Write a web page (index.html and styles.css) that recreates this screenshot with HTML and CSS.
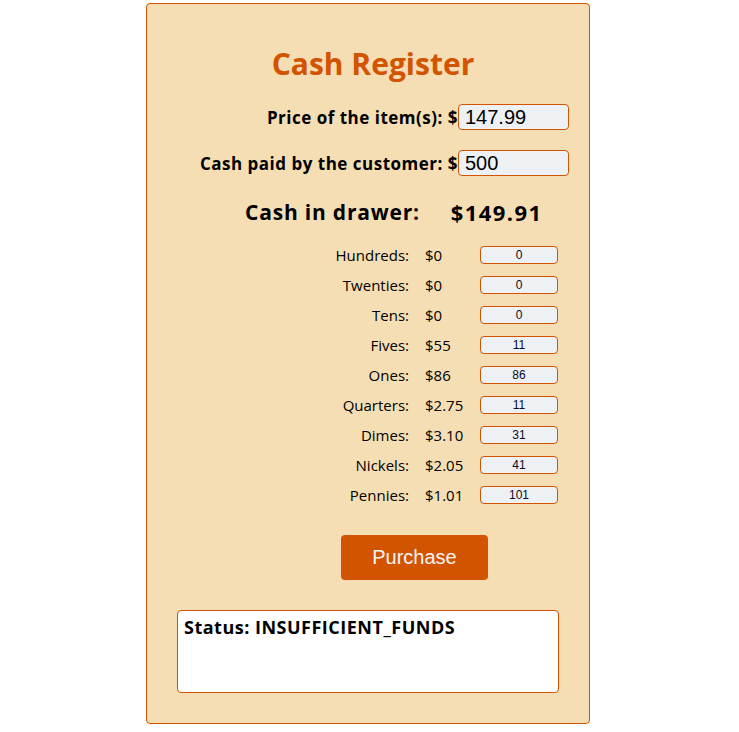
FILE: index.html
```html
<!DOCTYPE html>
<html>
<head>
<meta charset="utf-8">
<link rel="stylesheet" href="styles.css">
</head>
<body>
<main class="register">
  <h1 class="title">Cash Register</h1>
  <div class="field">
    <label class="field-label">Price of the item(s): $</label>
    <input class="field-input" type="text" value="147.99">
  </div>
  <div class="field">
    <label class="field-label">Cash paid by the customer: $</label>
    <input class="field-input" type="text" value="500">
  </div>
  <div class="drawer-total">
    <span class="drawer-total-label">Cash in drawer:</span>
    <span class="drawer-total-value">$149.91</span>
  </div>
  <div class="drawer">
    <span class="d-name">Hundreds:</span><span class="d-amt">$0</span><input class="d-input" value="0">
    <span class="d-name">Twenties:</span><span class="d-amt">$0</span><input class="d-input" value="0">
    <span class="d-name">Tens:</span><span class="d-amt">$0</span><input class="d-input" value="0">
    <span class="d-name">Fives:</span><span class="d-amt">$55</span><input class="d-input" value="11">
    <span class="d-name">Ones:</span><span class="d-amt">$86</span><input class="d-input" value="86">
    <span class="d-name">Quarters:</span><span class="d-amt">$2.75</span><input class="d-input" value="11">
    <span class="d-name">Dimes:</span><span class="d-amt">$3.10</span><input class="d-input" value="31">
    <span class="d-name">Nickels:</span><span class="d-amt">$2.05</span><input class="d-input" value="41">
    <span class="d-name">Pennies:</span><span class="d-amt">$1.01</span><input class="d-input" value="101">
  </div>
  <div class="actions">
    <button class="purchase">Purchase</button>
  </div>
  <div class="status">Status: INSUFFICIENT_FUNDS</div>
</main>
</body>
</html>
```
FILE: styles.css
```css
html, body {
  margin: 0;
  padding: 0;
  background: #ffffff;
}
body {
  padding-top: 3px;
  font-family: "Open Sans", "DejaVu Sans", sans-serif;
  color: #000;
}
.register {
  box-sizing: border-box;
  width: 444px;
  height: 721px;
  margin: 0 0 0 146px;
  background: #f5deb3;
  border: 1px solid #d35400;
  border-radius: 4px;
  padding: 0 20px 0 30px;
}
.title {
  margin: 40px 0 0 0;
  height: 40px;
  line-height: 40px;
  text-align: center;
  font-size: 30px;
  font-weight: bold;
  color: #d35400;
}
.field {
  display: flex;
  justify-content: flex-end;
  align-items: center;
  height: 26px;
  margin-top: 20px;
}
.field-label {
  font-size: 17px;
  font-weight: bold;
  letter-spacing: 0.5px;
}
.field-input {
  box-sizing: border-box;
  width: 111px;
  height: 26px;
  margin: 0;
  padding: 0 6px;
  background: #eef1f4;
  border: 1px solid #d35400;
  border-radius: 4px;
  font-family: "Liberation Sans", Arial, sans-serif;
  font-size: 20px;
  color: #000;
}
.drawer-total {
  display: flex;
  justify-content: flex-start;
  gap: 31px;
  margin: 22px 0 0 0;
  padding-left: 68px;
  height: 28px;
  line-height: 28px;
  font-weight: bold;
}
.drawer-total-label {
  font-size: 21px;
  letter-spacing: 0.8px;
}
.drawer-total-value {
  font-size: 22px;
  letter-spacing: 1.4px;
}
.drawer {
  display: grid;
  grid-template-columns: 1fr 55px 78px;
  grid-auto-rows: 30px;
  column-gap: 0;
  align-items: center;
  margin: 14px 11px 0 0;
  font-size: 15px;
}
.d-name {
  text-align: right;
  padding-right: 16px;
}
.d-input {
  box-sizing: border-box;
  width: 78px;
  height: 18px;
  margin: 0;
  padding: 0;
  background: #eef1f4;
  border: 1px solid #d35400;
  border-radius: 4px;
  text-align: center;
  font-family: "Liberation Sans", Arial, sans-serif;
  font-size: 12px;
  color: #0a0a23;
}
.actions {
  display: flex;
  padding-left: 164px;
  margin-top: 25px;
}
.purchase {
  width: 147px;
  height: 45px;
  background: #d35400;
  color: #f5f5f5;
  border: none;
  border-radius: 4px;
  font-family: "Liberation Sans", Arial, sans-serif;
  font-size: 20px;
}
.status {
  box-sizing: border-box;
  width: 382px;
  height: 83px;
  margin-top: 30px;
  padding: 4px 6px;
  background: #fff;
  border: 1px solid #d35400;
  border-radius: 4px;
  font-size: 18px;
  font-weight: bold;
  letter-spacing: 0.5px;
}
```
